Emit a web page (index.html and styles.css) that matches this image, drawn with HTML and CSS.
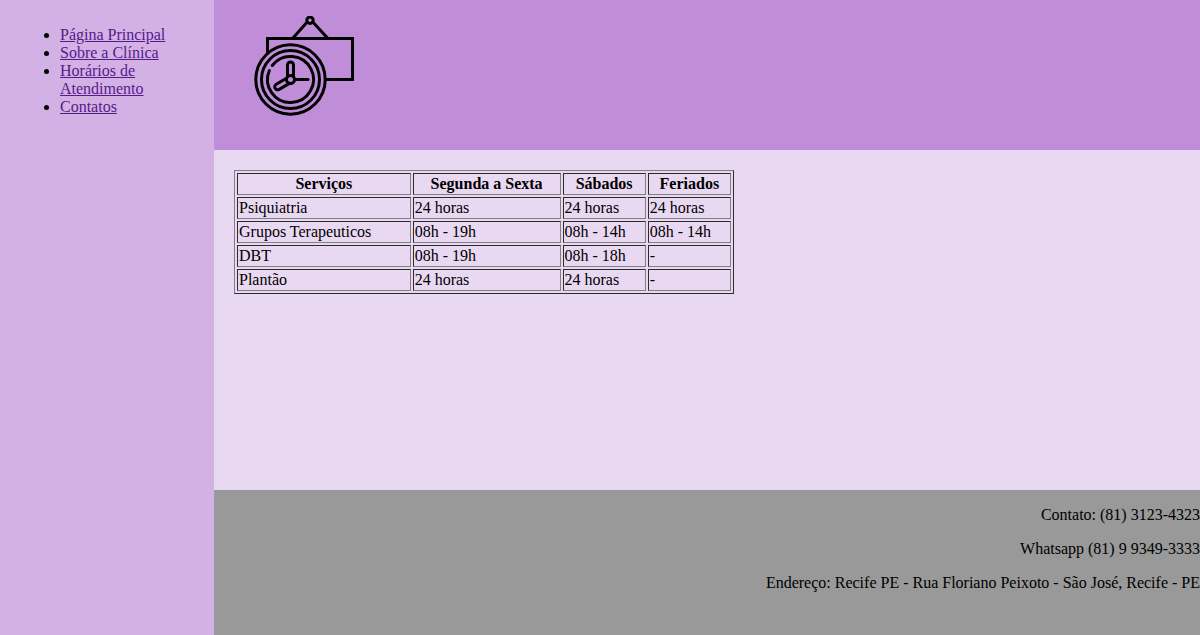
FILE: index.html
```html
<!DOCTYPE html>
<html lang="pt-BR">
<head>
<meta charset="utf-8">
<meta name="viewport" content="width=device-width, initial-scale=1">
<title>Horários de Atendimento</title>
<link rel="stylesheet" href="styles.css">
</head>
<body>
<nav class="sidebar">
  <ul class="menu">
    <li><a href="#principal">Página Principal</a></li>
    <li><a href="#sobre">Sobre a Clínica</a></li>
    <li><a href="#horarios">Horários de Atendimento</a></li>
    <li><a href="#contatos">Contatos</a></li>
  </ul>
</nav>
<div class="page">
  <header class="header">
    <svg class="logo" viewBox="0 0 100 100" role="img" aria-label="Relógio">
      <g fill="none" stroke="#000" stroke-width="3" stroke-linecap="round">
        <path d="M13.500 37V22.500H98.500V63.500H73"/>
        <circle cx="56" cy="4.200" r="3.200"/>
        <path d="M53.200 6L39 22M58.800 6L73.500 22"/>
        <circle cx="36.500" cy="63.500" r="34.700"/>
        <circle cx="36.500" cy="63.500" r="29"/>
        <path d="M18.250 49.500A23 23 0 1 1 15.330 54.510"/>
        <circle cx="36.500" cy="63.500" r="4"/>
        <path d="M33.500 60V49a3 3 0 0 1 6 0V60"/>
        <path d="M40.500 63.500H54"/>
        <path d="M32.500 62.200L22.200 68.200a3 3 0 0 0 3 5.200L35.500 67.400"/>
      </g>
    </svg>
  </header>
  <main class="content">
    <table class="schedule" border="1">
      <thead>
        <tr><th>Serviços</th><th>Segunda a Sexta</th><th>Sábados</th><th>Feriados</th></tr>
      </thead>
      <tbody>
        <tr><td>Psiquiatria</td><td>24 horas</td><td>24 horas</td><td>24 horas</td></tr>
        <tr><td>Grupos Terapeuticos</td><td>08h - 19h</td><td>08h - 14h</td><td>08h - 14h</td></tr>
        <tr><td>DBT</td><td>08h - 19h</td><td>08h - 18h</td><td>-</td></tr>
        <tr><td>Plantão</td><td>24 horas</td><td>24 horas</td><td>-</td></tr>
      </tbody>
    </table>
  </main>
  <footer class="footer">
    <p>Contato: (81) 3123-4323</p>
    <p>Whatsapp (81) 9 9349-3333</p>
    <p>Endereço: Recife PE - Rua Floriano Peixoto - São José, Recife - PE</p>
  </footer>
</div>
</body>
</html>
```

FILE: styles.css
```css
body {
  display: flex;
  min-height: 100vh;
  margin: 0;
  font-family: "Liberation Serif", "Times New Roman", serif;
  font-size: 16px;
  line-height: 18px;
  color: #000;
}

.sidebar {
  box-sizing: border-box;
  flex: 0 0 214px;
  padding: 10px 20px;
  background: #d4b1e5;
}

.menu {
  margin: 16px 0;
  padding-left: 40px;
}

.menu a {
  color: #551a8b;
}

.page {
  display: flex;
  flex: 1;
  flex-direction: column;
  min-width: 0;
}

.header {
  box-sizing: border-box;
  min-height: 150px;
  padding: 16px 40px;
  background: #c08dd9;
}

.logo {
  display: block;
  width: 100px;
  height: 100px;
}

.content {
  flex: 1;
  padding: 20px;
  background: #e9d8f2;
}

.schedule {
  width: 500px;
  max-width: 100%;
}

.footer {
  box-sizing: border-box;
  min-height: 145px;
  background: #999;
  text-align: right;
}

.footer p {
  margin: 16px 0;
}
```
